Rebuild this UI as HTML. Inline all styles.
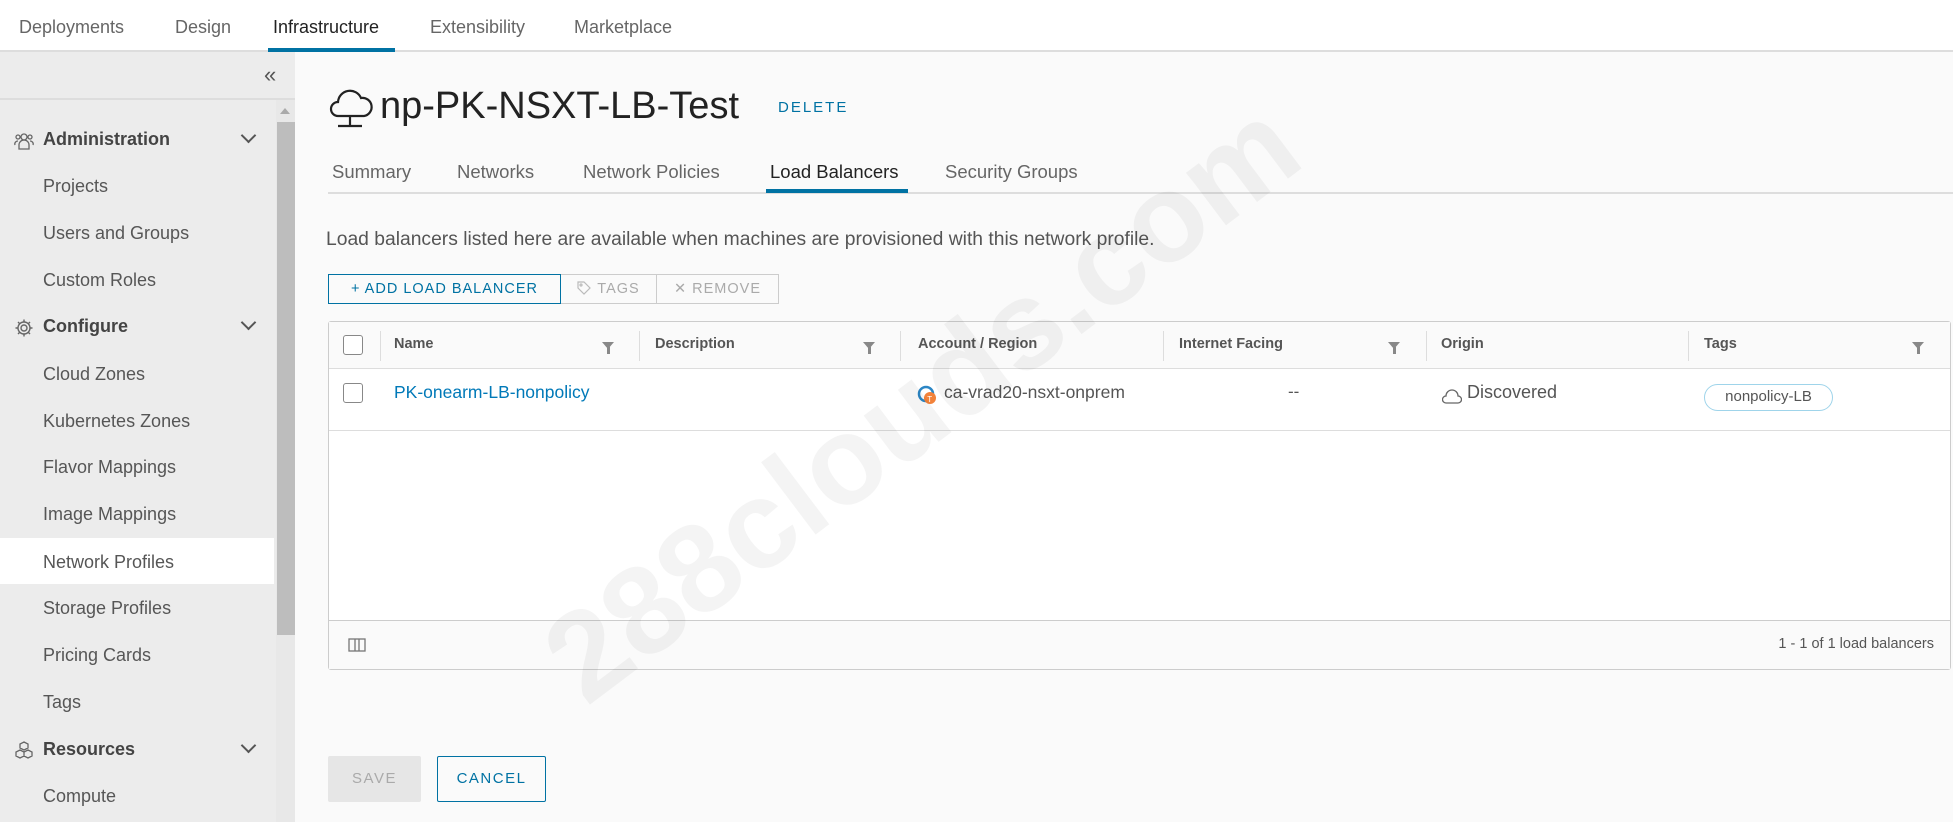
<!DOCTYPE html>
<html><head><meta charset="utf-8"><style>
*{box-sizing:border-box;margin:0;padding:0}
body{width:1953px;height:822px;overflow:hidden;background:#fafafa;font-family:"Liberation Sans",sans-serif;color:#333;position:relative}
.abs{position:absolute;white-space:nowrap}
.top{position:absolute;left:0;top:0;width:1953px;height:52px;background:#fff;border-bottom:2px solid #ddd}
.nav{position:absolute;top:17px;font-size:18px;color:#666}
.side{position:absolute;left:0;top:52px;width:295px;height:770px;background:#ececec}
.mi{position:absolute;left:43px;font-size:18px;color:#565656}
.mh{position:absolute;left:43px;font-size:18px;font-weight:bold;color:#444}
.chev{position:absolute;left:243px;width:11px;height:11px;border-right:2px solid #555;border-bottom:2px solid #555;transform:rotate(45deg)}
.sub{position:absolute;top:161px;font-size:18.5px;color:#666}
.btn{position:absolute;top:274px;height:30px;border:1px solid #ccc;font-size:14.5px;letter-spacing:1px;color:#aaa;text-align:center;line-height:28px;background:#fafafa}
.th{position:absolute;top:336px;font-size:14.5px;font-weight:bold;color:#555}
.sep{position:absolute;top:331px;width:1px;height:30px;background:#ddd}
.flt{position:absolute;top:342px;width:0;height:0;border-left:6px solid transparent;border-right:6px solid transparent;border-top:7px solid #888}
.flt:after{content:"";position:absolute;left:-1.5px;top:-2px;width:3px;height:7px;background:#888}
.cb{position:absolute;width:20px;height:20px;border:1.5px solid #888;border-radius:3px;background:#fff}
</style></head><body>
<div class="top"></div>
<div class="abs nav" style="left:19px">Deployments</div>
<div class="abs nav" style="left:175px">Design</div>
<div class="abs nav" style="left:273px;color:#222">Infrastructure</div>
<div class="abs" style="left:268px;top:48px;width:127px;height:4px;background:#0072a3"></div>
<div class="abs nav" style="left:430px">Extensibility</div>
<div class="abs nav" style="left:574px">Marketplace</div>

<div class="side">
<div class="abs" style="left:0;top:0;width:295px;height:48px;border-bottom:2px solid #ddd"></div>
<div class="abs" style="left:264px;top:10px;font-size:22px;color:#555">«</div>
<div class="abs" style="left:276px;top:48px;width:19px;height:722px;background:#e8e8e8"></div>
<div class="abs" style="left:280px;top:56px;width:0;height:0;border-left:5px solid transparent;border-right:5px solid transparent;border-bottom:6px solid #aaa"></div>
<div class="abs" style="left:277px;top:70px;width:18px;height:513px;background:#bdbdbd"></div>
<div class="abs" style="left:0;top:486px;width:274px;height:46px;background:#fff"></div>
</div>
<svg class="abs" style="left:14px;top:131px" width="20" height="20" viewBox="0 0 20 20" fill="none" stroke="#666" stroke-width="1.3"><circle cx="10" cy="6" r="3"/><circle cx="4" cy="6" r="2"/><circle cx="16" cy="6" r="2"/><path d="M5 18v-4a5 5 0 0 1 10 0v4z"/><path d="M1 14a3 3 0 0 1 3-4M19 14a3 3 0 0 0-3-4"/></svg>
<div class="mh" style="top:129px">Administration</div><div class="chev" style="top:130px"></div>
<div class="mi" style="top:176px">Projects</div>
<div class="mi" style="top:223px">Users and Groups</div>
<div class="mi" style="top:270px">Custom Roles</div>
<svg class="abs" style="left:14px;top:318px" width="20" height="20" viewBox="0 0 20 20" fill="none" stroke="#666" stroke-width="1.4"><circle cx="10" cy="10" r="3"/><path d="M10 1.5v3M10 15.5v3M1.5 10h3M15.5 10h3M4 4l2 2M14 14l2 2M4 16l2-2M14 6l2-2"/><circle cx="10" cy="10" r="6"/></svg>
<div class="mh" style="top:316px">Configure</div><div class="chev" style="top:317px"></div>
<div class="mi" style="top:364px">Cloud Zones</div>
<div class="mi" style="top:411px">Kubernetes Zones</div>
<div class="mi" style="top:457px">Flavor Mappings</div>
<div class="mi" style="top:504px">Image Mappings</div>
<div class="mi" style="top:552px">Network Profiles</div>
<div class="mi" style="top:598px">Storage Profiles</div>
<div class="mi" style="top:645px">Pricing Cards</div>
<div class="mi" style="top:692px">Tags</div>
<svg class="abs" style="left:14px;top:740px" width="20" height="20" viewBox="0 0 20 20" fill="none" stroke="#666" stroke-width="1.3"><path d="M10 2l4 2v4l-4 2-4-2V4zM6 10l4 2v4l-4 2-4-2v-4zM14 10l4 2v4l-4 2-4-2v-4z"/></svg>
<div class="mh" style="top:739px">Resources</div><div class="chev" style="top:740px"></div>
<div class="mi" style="top:786px">Compute</div>

<svg class="abs" style="left:328px;top:84px" width="46" height="48" viewBox="0 0 46 48" fill="none" stroke="#222" stroke-width="2.2"><path d="M10 32a7 7 0 0 1 0-14 12 12 0 0 1 23-4 9 9 0 0 1 3 18z"/><path d="M22 32v9M10 42h24"/></svg>
<div class="abs" style="left:380px;top:85px;font-size:38px;color:#222">np-PK-NSXT-LB-Test</div>
<div class="abs" style="left:778px;top:99px;font-size:15px;letter-spacing:2px;color:#0072a3">DELETE</div>

<div class="sub" style="left:332px">Summary</div>
<div class="sub" style="left:457px">Networks</div>
<div class="sub" style="left:583px">Network Policies</div>
<div class="sub" style="left:770px;color:#222">Load Balancers</div>
<div class="sub" style="left:945px">Security Groups</div>
<div class="abs" style="left:328px;top:192px;width:1625px;height:2px;background:#ddd"></div>
<div class="abs" style="left:766px;top:189px;width:142px;height:4px;background:#0072a3"></div>

<div class="abs" style="left:326px;top:229px;font-size:19.3px;color:#555">Load balancers listed here are available when machines are provisioned with this network profile.</div>

<div class="btn" style="left:328px;width:233px;border-color:#0072a3;color:#0072a3;z-index:2">+ ADD LOAD BALANCER</div>
<div class="btn" style="left:560px;width:97px"><svg width="14" height="14" viewBox="0 0 14 14" fill="none" stroke="#bbb" stroke-width="1.2" style="vertical-align:-2px;margin-right:6px"><path d="M1 1h6l6 6-6 6-6-6z"/><circle cx="4" cy="4" r="1"/></svg>TAGS</div>
<div class="btn" style="left:656px;width:123px">✕ REMOVE</div>

<div class="abs" style="left:328px;top:321px;width:1623px;height:349px;border:1px solid #ccc;border-radius:3px;background:#fff"></div>
<div class="abs" style="left:329px;top:322px;width:1621px;height:47px;background:#fafafa;border-bottom:1px solid #ddd"></div>
<div class="cb" style="left:343px;top:335px"></div>
<div class="sep" style="left:380px"></div><div class="sep" style="left:639px"></div><div class="sep" style="left:900px"></div><div class="sep" style="left:1163px"></div><div class="sep" style="left:1426px"></div><div class="sep" style="left:1688px"></div>
<div class="th" style="left:394px">Name</div>
<div class="th" style="left:655px">Description</div>
<div class="th" style="left:918px">Account / Region</div>
<div class="th" style="left:1179px">Internet Facing</div>
<div class="th" style="left:1441px">Origin</div>
<div class="th" style="left:1704px">Tags</div>
<div class="flt" style="left:602px"></div><div class="flt" style="left:863px"></div><div class="flt" style="left:1388px"></div><div class="flt" style="left:1912px"></div>

<div class="cb" style="left:343px;top:383px"></div>
<div class="abs" style="left:394px;top:382px;font-size:17.5px;color:#0079b8">PK-onearm-LB-nonpolicy</div>
<svg class="abs" style="left:917px;top:385px" width="22" height="22" viewBox="0 0 22 22"><circle cx="9" cy="9" r="7" fill="none" stroke="#2b86c5" stroke-width="2.5"/><circle cx="13" cy="13" r="6" fill="#f2823a"/><text x="10.3" y="17" font-size="8" fill="#fff" font-family="Liberation Sans">T</text></svg>
<div class="abs" style="left:944px;top:382px;font-size:17.5px;color:#555">ca-vrad20-nsxt-onprem</div>
<div class="abs" style="left:1288px;top:382px;font-size:17px;color:#555">--</div>
<svg class="abs" style="left:1442px;top:386px" width="20" height="20" viewBox="0 0 20 20" fill="none" stroke="#666" stroke-width="1.3"><path d="M4 17a3.5 3.5 0 0 1 0-7 6 6 0 0 1 12 0 3.5 3.5 0 0 1 0 7z"/></svg>
<div class="abs" style="left:1467px;top:382px;font-size:18px;color:#555">Discovered</div>
<div class="abs" style="left:1704px;top:384px;width:129px;height:27px;border:1.5px solid #9fd4ea;border-radius:14px;font-size:15px;color:#555;text-align:center;line-height:24px">nonpolicy-LB</div>
<div class="abs" style="left:329px;top:430px;width:1621px;height:1px;background:#ddd"></div>

<div class="abs" style="left:329px;top:620px;width:1621px;height:49px;background:#fafafa;border-top:1px solid #ccc"></div>
<svg class="abs" style="left:348px;top:637px" width="18" height="16" viewBox="0 0 18 16" fill="none" stroke="#777" stroke-width="1.3"><rect x="1" y="2" width="16" height="12"/><path d="M7 2v12M11 2v12"/></svg>
<div class="abs" style="left:1710px;top:636px;width:224px;text-align:right;font-size:14.5px;color:#555">1 - 1 of 1 load balancers</div>

<div class="abs" style="left:328px;top:756px;width:93px;height:46px;background:#e6e6e6;border-radius:2px;font-size:15px;letter-spacing:1.5px;color:#aaa;text-align:center;line-height:46px">SAVE</div>
<div class="abs" style="left:437px;top:756px;width:109px;height:46px;border:1.5px solid #0072a3;border-radius:2px;font-size:15px;letter-spacing:1.5px;color:#0072a3;text-align:center;line-height:43px">CANCEL</div>

<div class="abs" style="left:470px;top:330px;font-size:125px;font-weight:bold;color:rgba(0,0,0,0.045);transform:rotate(-37deg);transform-origin:center;pointer-events:none">288clouds.com</div>
</body></html>
